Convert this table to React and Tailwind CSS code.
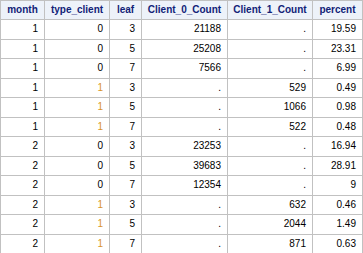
const columns = ["month", "type_client", "leaf", "Client_0_Count", "Client_1_Count", "percent"];

const rows = [
  [1, 0, 3, "21188", ".", "19.59"],
  [1, 0, 5, "25208", ".", "23.31"],
  [1, 0, 7, "7566", ".", "6.99"],
  [1, 1, 3, ".", "529", "0.49"],
  [1, 1, 5, ".", "1066", "0.98"],
  [1, 1, 7, ".", "522", "0.48"],
  [2, 0, 3, "23253", ".", "16.94"],
  [2, 0, 5, "39683", ".", "28.91"],
  [2, 0, 7, "12354", ".", "9"],
  [2, 1, 3, ".", "632", "0.46"],
  [2, 1, 5, ".", "2044", "1.49"],
  [2, 1, 7, ".", "871", "0.63"],
];

export default function App() {
  return (
    <div className="w-[363px] h-[253px] overflow-hidden bg-white">
      <div
        className="grid grid-cols-[43px_64px_31px_85px_84px_49px] grid-rows-[18px_repeat(12,18.5px)] gap-px p-px bg-[#c1c1c1] text-[10px] leading-none"
        style={{ fontFamily: '"Liberation Sans", Arial, sans-serif' }}
      >
        {columns.map((c) => (
          <div
            key={c}
            className="bg-[#edf2f9] text-[#112277] font-bold flex items-center justify-center px-1"
          >
            {c}
          </div>
        ))}
        {rows.map((r, i) =>
          r.map((v, j) => (
            <div
              key={i + "-" + j}
              className={
                "bg-white flex items-center justify-end pr-[6px] " +
                (j === 1 && v === 1 ? "text-[#d9952b]" : "text-black")
              }
            >
              {v}
            </div>
          ))
        )}
      </div>
    </div>
  );
}
